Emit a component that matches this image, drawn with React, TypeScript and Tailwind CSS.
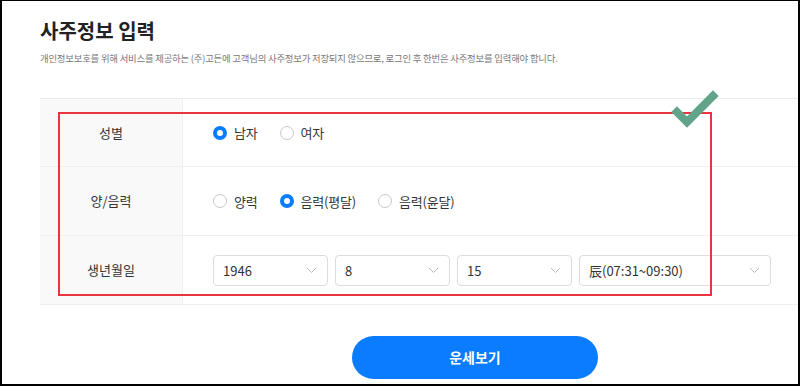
import React from "react";

const font = { fontFamily: '"Noto Sans CJK KR", "Noto Sans", sans-serif' };

function Radio({ checked, label }: { checked?: boolean; label: string }) {
  return (
    <div className="flex items-center gap-[7px]">
      {checked ? (
        <span className="box-border block h-[14px] w-[14px] shrink-0 rounded-full border-[4px] border-[#0a7cff] bg-white" />
      ) : (
        <span className="box-border block h-[14px] w-[14px] shrink-0 rounded-full border border-[#c8c8c8] bg-white" />
      )}
      <span className="text-[13px] leading-none tracking-[-0.2px] text-[#333]">{label}</span>
    </div>
  );
}

function Select({ value, w }: { value: string; w: string }) {
  return (
    <div
      className={`box-border flex h-[31px] items-center justify-between rounded-[4px] border border-[#dcdcdc] bg-white pl-[9px] pr-[10px] ${w}`}
    >
      <span className="text-[13px] leading-none text-[#333]">{value}</span>
      <svg width="11" height="7" viewBox="0 0 11 7" fill="none">
        <path d="M1 1l4.5 4.5L10 1" stroke="#bdbdbd" strokeWidth="1" />
      </svg>
    </div>
  );
}

export default function App() {
  return (
    <div
      className="relative box-border h-[386px] w-[800px] overflow-hidden border-t border-l-2 border-r-2 border-b-2 border-black bg-white"
      style={font}
    >
      <div className="pl-[38px] pt-[16px]">
        <h1 className="text-[20px] font-bold leading-[28px] text-[#222]">사주정보 입력</h1>
        <p className="mt-[7px] text-[9.4px] leading-[12px] tracking-[-0.2px] text-[#777]">
          개인정보보호를 위해 서비스를 제공하는 (주)고든에 고객님의 사주정보가 저장되지 않으므로, 로그인 후 한번은 사주정보를 입력해야 합니다.
        </p>
      </div>

      <div className="ml-[38px] mt-[34px] border-t border-[#ececec]">
        <div className="flex h-[68px] border-b border-[#efefef]">
          <div className="flex w-[143px] items-center justify-center border-r border-[#efefef] bg-[#f9f9f9] text-[13px] text-[#333]">
            성별
          </div>
          <div className="flex items-center gap-[22px] pl-[30px]">
            <Radio checked label="남자" />
            <Radio label="여자" />
          </div>
        </div>
        <div className="flex h-[69px] border-b border-[#efefef]">
          <div className="flex w-[143px] items-center justify-center border-r border-[#efefef] bg-[#f9f9f9] text-[13px] text-[#333]">
            양/음력
          </div>
          <div className="flex items-center gap-[22px] pl-[30px]">
            <Radio label="양력" />
            <Radio checked label="음력(평달)" />
            <Radio label="음력(윤달)" />
          </div>
        </div>
        <div className="flex h-[69px] border-b border-[#efefef]">
          <div className="flex w-[143px] items-center justify-center border-r border-[#efefef] bg-[#f9f9f9] text-[13px] text-[#333]">
            생년월일
          </div>
          <div className="flex items-center gap-[7px] pl-[30px]">
            <Select value="1946" w="w-[115px]" />
            <Select value="8" w="w-[115px]" />
            <Select value="15" w="w-[115px]" />
            <Select value="辰(07:31~09:30)" w="w-[192px]" />
          </div>
        </div>
      </div>

      <div className="mt-[31px] flex pl-[350px]">
        <button className="h-[43px] w-[246px] rounded-full bg-[#0a7cff] text-[14px] font-bold text-white">
          운세보기
        </button>
      </div>

      <div className="pointer-events-none absolute left-[56px] top-[111px] h-[184px] w-[654px] border-2 border-[#e8353f]" />
      <svg
        className="absolute left-[668px] top-[86px]"
        width="50"
        height="44"
        viewBox="0 0 50 44"
      >
        <polyline
          points="7,25 17,35 43,9"
          fill="none"
          stroke="#62a48a"
          strokeWidth="8"
          strokeLinecap="square"
        />
      </svg>
    </div>
  );
}
